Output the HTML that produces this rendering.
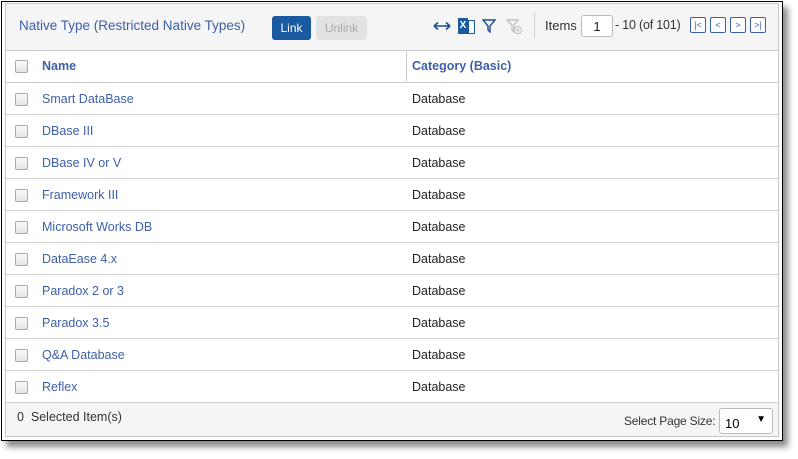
<!DOCTYPE html>
<html><head><style>
body{margin:0;width:798px;height:459px;background:#fff;font-family:"Liberation Sans",sans-serif;position:relative;overflow:hidden}
.frame{position:absolute;left:1px;top:1px;width:780px;height:438px;border:1px solid #000;background:#fff;box-shadow:5px 6px 6px rgba(0,0,0,.45)}
.panel{position:absolute;left:5px;top:3px;width:772px;height:432px;border:1px solid #c8c8c8;background:#fff}
.hdr{position:absolute;left:0;top:0;width:772px;height:46px;background:#f5f5f5;border-bottom:1px solid #ccc}
.title{position:absolute;left:13px;top:14px;font-size:13.5px;color:#3d5fa8}
.btn{position:absolute;top:12px;height:24px;line-height:24px;font-size:12px;border-radius:3px;text-align:center}
.th{position:absolute;top:47px;height:31px;width:772px;background:#fff;border-bottom:1px solid #ccc;font-weight:bold;font-size:12.5px;color:#3d5fa8}
.row{position:absolute;left:0;width:772px;height:31px;border-bottom:1px solid #d0d0d0;font-size:12.5px}
.cb{position:absolute;left:9px;width:11px;height:11px;border:1px solid #aaa;border-radius:2px;background:linear-gradient(#fafafa,#e4e4e4)}
.n{position:absolute;left:36px;top:9px;color:#3d5fa8}
.c{position:absolute;left:406px;top:9px;color:#222}
.pg{position:absolute;top:13px;width:14px;height:14px;border:1px solid #3d5fa8;border-radius:2px;font-size:9px;color:#3d5fa8;text-align:center;line-height:14px;background:#fff}
</style></head><body>
<div class="frame"></div>
<div class="panel">
<div class="hdr">
<div class="title">Native Type (Restricted Native Types)</div>
<div class="btn" style="left:266px;width:39px;background:#1a5aa0;color:#fff">Link</div>
<div class="btn" style="left:310px;width:51px;background:#e2e2e2;color:#aaa">Unlink</div>
<svg style="position:absolute;left:427px;top:17px" width="18" height="10"><path d="M1 5H17M1 5l4-3.5M1 5l4 3.5M17 5l-4-3.5M17 5l-4 3.5" stroke="#1a4f8f" stroke-width="1.6" fill="none"/></svg>
<div style="position:absolute;left:452px;top:14px;width:10px;height:16px;background:#1d5a9e;color:#fff;font-size:10px;font-weight:bold;text-align:center;line-height:16px">X</div>
<div style="position:absolute;left:462px;top:16px;width:5px;height:12px;border:1px solid #1d5a9e;background:#fff"></div>
<svg style="position:absolute;left:476px;top:15px" width="14" height="14"><path d="M1 1H13L8 7V13L6 11V7Z" fill="none" stroke="#1a4f8f" stroke-width="1.4"/></svg>
<svg style="position:absolute;left:500px;top:15px" width="18" height="16"><path d="M1 1H12L8 6V13L6 11V6Z" fill="none" stroke="#bbb" stroke-width="1.2"/><circle cx="12" cy="11" r="3.5" fill="#fff" stroke="#bbb"/><path d="M10.5 9.5l3 3M13.5 9.5l-3 3" stroke="#bbb"/></svg>
<div style="position:absolute;left:528px;top:9px;width:1px;height:25px;background:#ccc"></div>
<div style="position:absolute;left:539px;top:14px;font-size:13px;color:#333">Items</div>
<div style="position:absolute;left:575px;top:11px;width:30px;height:20px;border:1px solid #bbb;border-radius:3px;background:#fff;font-size:13px;text-align:center;line-height:22px;color:#222">1</div>
<div style="position:absolute;left:609px;top:14px;font-size:12.5px;color:#333;letter-spacing:-0.2px">- 10 (of 101)</div>
<div class="pg" style="left:684px">|&lt;</div>
<div class="pg" style="left:704px">&lt;</div>
<div class="pg" style="left:724px">&gt;</div>
<div class="pg" style="left:744px">&gt;|</div>
</div>
<div class="th"><div class="cb" style="top:9px"></div><div class="n" style="top:8px">Name</div><div style="position:absolute;left:400px;top:0;width:1px;height:31px;background:#ccc"></div><div style="position:absolute;left:406px;top:8px">Category (Basic)</div></div>
<div class="row" style="top:79px"><div class="cb" style="top:10px"></div><div class="n">Smart DataBase</div><div class="c">Database</div></div>
<div class="row" style="top:111px"><div class="cb" style="top:10px"></div><div class="n">DBase III</div><div class="c">Database</div></div>
<div class="row" style="top:143px"><div class="cb" style="top:10px"></div><div class="n">DBase IV or V</div><div class="c">Database</div></div>
<div class="row" style="top:175px"><div class="cb" style="top:10px"></div><div class="n">Framework III</div><div class="c">Database</div></div>
<div class="row" style="top:207px"><div class="cb" style="top:10px"></div><div class="n">Microsoft Works DB</div><div class="c">Database</div></div>
<div class="row" style="top:239px"><div class="cb" style="top:10px"></div><div class="n">DataEase 4.x</div><div class="c">Database</div></div>
<div class="row" style="top:271px"><div class="cb" style="top:10px"></div><div class="n">Paradox 2 or 3</div><div class="c">Database</div></div>
<div class="row" style="top:303px"><div class="cb" style="top:10px"></div><div class="n">Paradox 3.5</div><div class="c">Database</div></div>
<div class="row" style="top:335px"><div class="cb" style="top:10px"></div><div class="n">Q&amp;A Database</div><div class="c">Database</div></div>
<div class="row" style="top:367px"><div class="cb" style="top:10px"></div><div class="n">Reflex</div><div class="c">Database</div></div>
<div style="position:absolute;left:0;top:399px;width:772px;height:33px;background:#f5f5f5"></div>
<div style="position:absolute;left:11px;top:406px;font-size:12.5px;color:#333">0&nbsp; Selected Item(s)</div>
<div style="position:absolute;left:618px;top:410px;font-size:12px;color:#333;letter-spacing:-0.2px">Select Page Size:</div>
<div style="position:absolute;left:713px;top:404px;width:52px;height:24px;border:1px solid #bbb;border-radius:3px;background:#fff"><span style="position:absolute;left:5px;top:7px;font-size:13px">10</span><span style="position:absolute;right:6px;top:5px;font-size:10px">&#9660;</span></div>
</div>
</body></html>
